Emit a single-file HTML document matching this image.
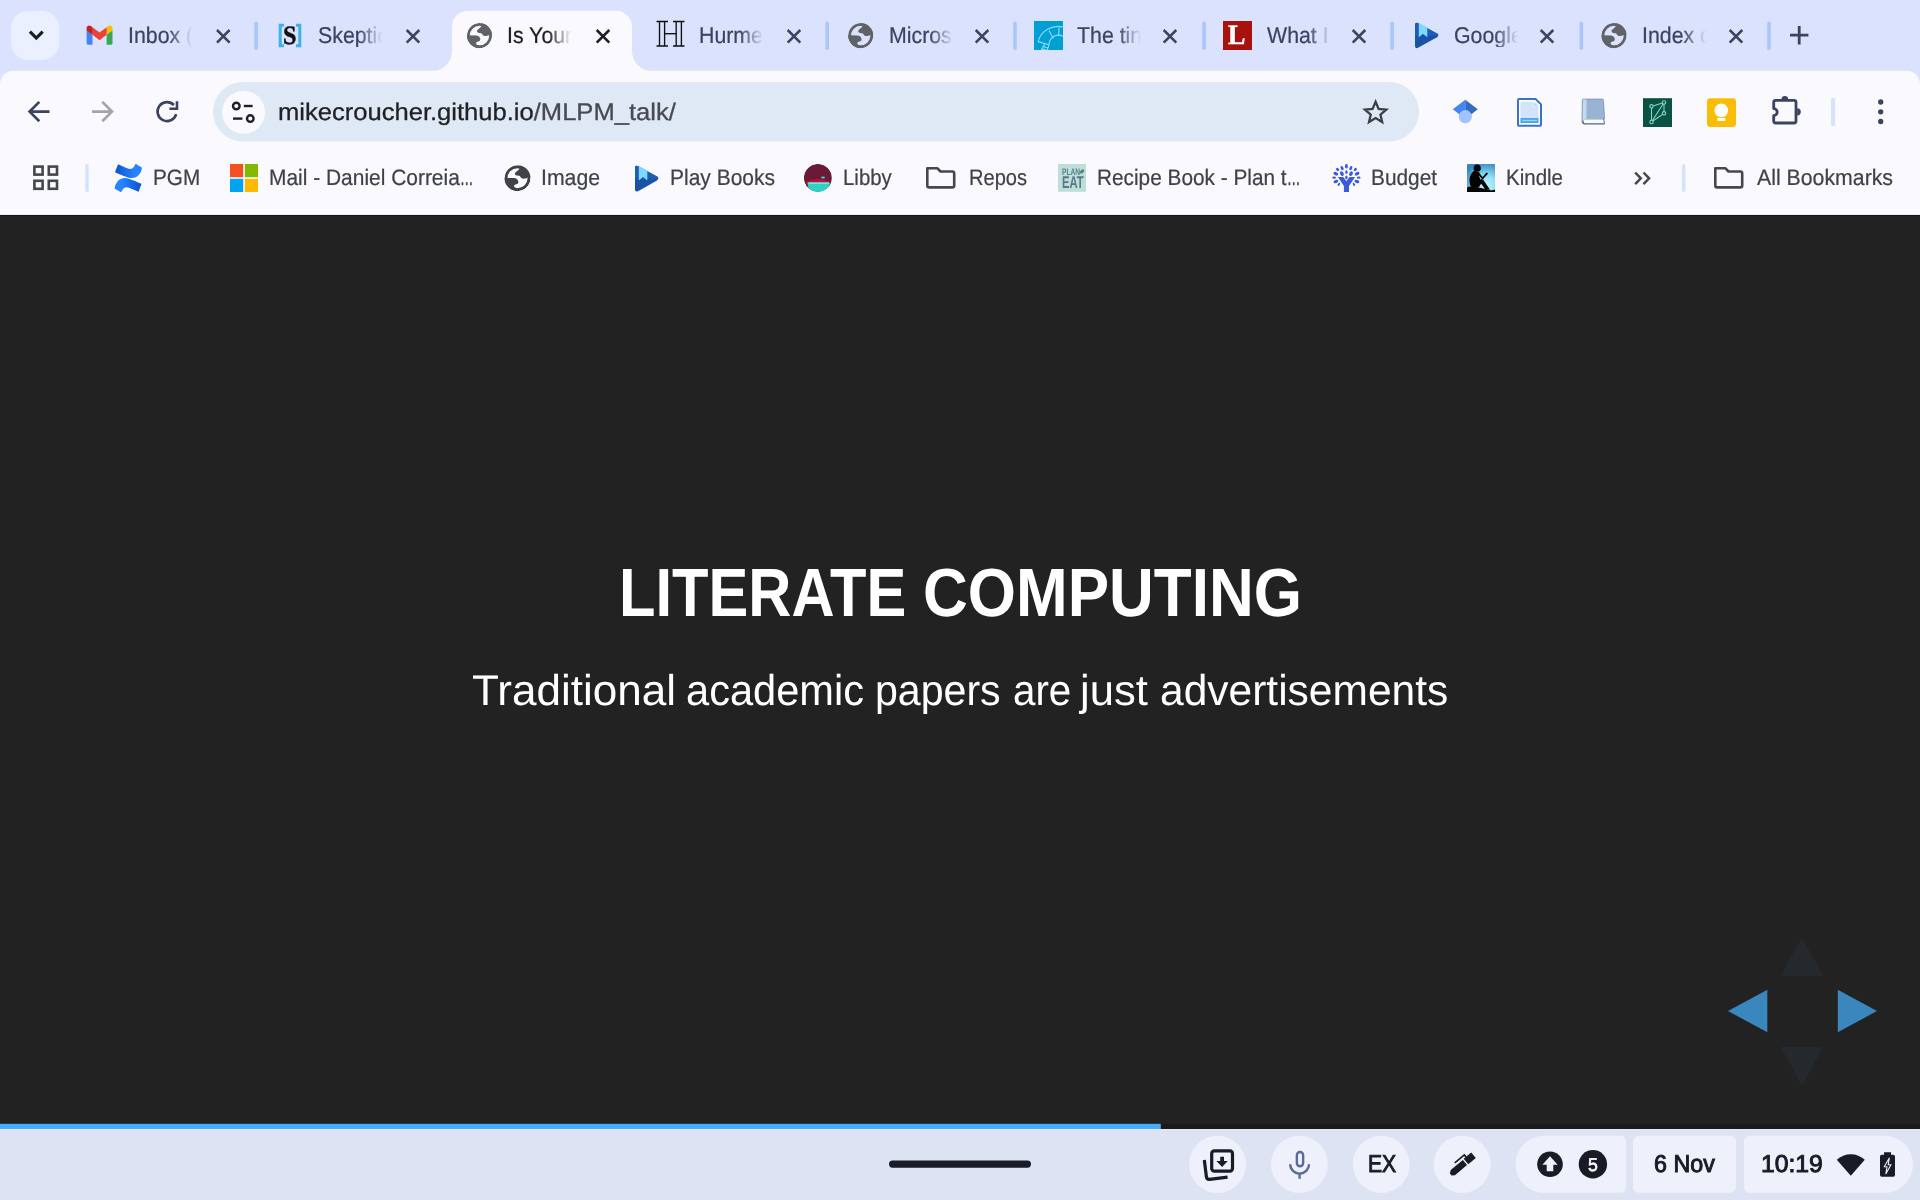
<!DOCTYPE html>
<html lang="en"><head><meta charset="utf-8"><title>Is Your Research Software Correct?</title>
<style>
html,body{margin:0;padding:0}
body{width:1920px;height:1200px;overflow:hidden;background:#222222;position:relative;font-family:"Liberation Sans",sans-serif}
.t{text-rendering:geometricPrecision;position:absolute;white-space:nowrap;line-height:1;transform-origin:0 0;display:block}
.abs{position:absolute}
svg{position:absolute;overflow:visible}
.serif{font-family:"Liberation Serif",serif}
</style></head>
<body>

<!-- ======== browser chrome background ======== -->
<svg class="abs" style="left:0;top:0" width="1920" height="215" viewBox="0 0 1920 215">
  <rect x="0" y="0" width="1920" height="100" fill="#dae2fd"/>
  <!-- toolbar with rounded top corners -->
  <path d="M0 214 V84.3 A13.5 13.5 0 0 1 13.5 70.8 H1906.5 A13.5 13.5 0 0 1 1920 84.3 V214 Z" fill="#f9f9fe"/>
  <rect x="0" y="214" width="1920" height="1" fill="#e6edfc"/>
  <!-- active tab -->
  <path d="M432 71 A20 20 0 0 0 452 51 V26.7 A16 16 0 0 1 468 10.7 H616 A16 16 0 0 1 632 26.7 V51 A20 20 0 0 0 652 71 Z" fill="#f9f9fe"/>
  <!-- tab search button -->
  <rect x="11" y="11" width="48.3" height="49" rx="17" fill="#eaf0ff"/>
  <path d="M29.9 31.7 L36.300 38.1 L42.700 31.7" fill="none" stroke="#1b1d24" stroke-width="3.2"/>
  <!-- tab separators -->
  <g fill="#a8c7fa">
    <rect x="254.3" y="21.5" width="3.6" height="28.6" rx="1.8"/>
    <rect x="825.4" y="21.5" width="3.6" height="28.6" rx="1.8"/>
    <rect x="1013.2" y="21.5" width="3.6" height="28.6" rx="1.8"/>
    <rect x="1202.3" y="21.5" width="3.6" height="28.6" rx="1.8"/>
    <rect x="1390.3" y="21.5" width="3.6" height="28.6" rx="1.8"/>
    <rect x="1579.5" y="21.5" width="3.6" height="28.6" rx="1.8"/>
    <rect x="1767.2" y="21.5" width="3.6" height="28.6" rx="1.8"/>
  </g>
  <!-- close buttons -->
  <g fill="none" stroke="#3a4362" stroke-width="2.5">
    <path d="M217 30 l12.6 12.6 m0 -12.6 l-12.6 12.6"/>
    <path d="M406.7 30 l12.6 12.6 m0 -12.6 l-12.6 12.6"/>
    <path d="M787.7 30 l12.6 12.6 m0 -12.6 l-12.6 12.6"/>
    <path d="M975.7 30 l12.6 12.6 m0 -12.6 l-12.6 12.6"/>
    <path d="M1163.7 30 l12.6 12.6 m0 -12.6 l-12.6 12.6"/>
    <path d="M1352.7 30 l12.6 12.6 m0 -12.6 l-12.6 12.6"/>
    <path d="M1540.7 30 l12.6 12.6 m0 -12.6 l-12.6 12.6"/>
    <path d="M1729.7 30 l12.6 12.6 m0 -12.6 l-12.6 12.6"/>
  </g>
  <path d="M596.7 30 l12.6 12.6 m0 -12.6 l-12.6 12.6" fill="none" stroke="#1b1d24" stroke-width="2.5"/>
  <!-- new tab plus -->
  <path d="M1790 35.2 h18.4 M1799.2 26 v18.4" fill="none" stroke="#3a4362" stroke-width="2.8"/>

  <!-- omnibox -->
  <rect x="213" y="82" width="1206" height="59.5" rx="29.75" fill="#dfe9f5"/>
  <circle cx="243.6" cy="112.3" r="21.5" fill="#f9f9fe"/>
  <!-- site info (tune) icon -->
  <g fill="none" stroke="#1f2125" stroke-width="2.4">
    <circle cx="236.3" cy="106" r="3.3"/>
    <path d="M243.8 106 h8.8"/>
    <circle cx="250.3" cy="118.6" r="3.3"/>
    <path d="M233 118.6 h9.4"/>
  </g>
  <!-- back -->
  <path d="M49.5 111.6 H30.6 M39.3 101.9 L29.6 111.6 L39.3 121.3" fill="none" stroke="#3a4362" stroke-width="2.7"/>
  <!-- forward (disabled) -->
  <path d="M92 111.6 H111 M102.3 101.9 L112 111.6 L102.3 121.3" fill="none" stroke="#a3a5ab" stroke-width="2.7"/>
  <!-- reload -->
  <path d="M176.2 114.2 A9.5 9.5 0 1 1 173.9 105" fill="none" stroke="#3a4362" stroke-width="2.6"/>
  <path d="M177 101.200 V108.800 H169.400" fill="none" stroke="#3a4362" stroke-width="2.6"/>
  <!-- star -->
  <path d="M1375.60 101.80 L1378.60 108.87 L1386.25 109.54 L1380.45 114.58 L1382.18 122.06 L1375.60 118.10 L1369.02 122.06 L1370.75 114.58 L1364.95 109.54 L1372.60 108.87 Z" fill="none" stroke="#3c4043" stroke-width="2.3" stroke-linejoin="miter" stroke-miterlimit="6"/>

  <!-- extension icons -->
  <!-- scholar -->
  <path d="M1465.3 99.7 L1452.8 109.3 L1465.3 118.9 Z" fill="#4285f4"/>
  <path d="M1465.3 99.7 L1477.8 109.3 L1465.3 118.9 Z" fill="#356ac3"/>
  <circle cx="1465.3" cy="116.6" r="6.6" fill="#a0c3ff"/>
  <!-- document -->
  <path d="M1519 98 H1536 L1542 104 V125 Q1542 126.700 1540.300 126.700 H1518.700 Q1517 126.700 1517 125 V100 Q1517 98 1519 98 Z" fill="#3a74c4"/>
  <path d="M1519 100 H1535.200 L1540 104.800 V124.700 H1519 Z" fill="#fdfdff"/>
  <path d="M1520.500 101.700 H1533 V107 H1538.500 V118 H1520.500 Z" fill="#d3e3f9"/>
  <path d="M1533.600 101.200 L1539 106.600 H1533.600 Z" fill="#bfd8f4"/>
  <rect x="1520.500" y="118" width="18" height="5" fill="#45a6f1"/>
  <rect x="1522.200" y="119.800" width="14.600" height="1.400" fill="#9dd2f8"/>
  <!-- book -->
  <path d="M1583.300 99 H1602.500 Q1603.300 99 1603.400 100 L1604.700 118.500 L1602.800 120 H1584.500 L1581.900 122 L1582.300 100 Q1582.400 99 1583.300 99 Z" fill="#98b3d3" stroke="#6a7fb0" stroke-width=".6"/>
  <path d="M1583 99.600 H1586.600 L1586.400 118.600 L1582.600 120.800 Z" fill="#c6d9ec"/>
  <path d="M1584.800 119.400 H1603.400 L1604.200 123.300 H1584 Q1582.600 121.500 1584.800 119.400 Z" fill="#fbfbf6"/>
  <path d="M1582 121.500 Q1582 124.500 1584.500 124.500 H1604.500 V123.200 H1585 Q1583.400 123.200 1583.500 121 Z" fill="#4f629b"/>
  <path d="M1603.600 118.500 L1604.500 124" stroke="#4f629b" stroke-width=".9" fill="none"/>
  <!-- graph icon -->
  <rect x="1643" y="98.2" width="29" height="28.8" fill="#0b5145"/>
  <g fill="none" stroke="#7fd8c4" stroke-width="1.1">
    <path d="M1651.5 106.5 L1664 102.5 L1664 113.5 L1651.5 122 Z M1664 102.5 L1651.5 122"/>
    <circle cx="1651.5" cy="106.3" r="1.7" fill="#0b5145"/>
    <circle cx="1664" cy="102.5" r="1.7" fill="#0b5145"/>
    <circle cx="1664" cy="113.3" r="1.7" fill="#0b5145"/>
    <circle cx="1651.5" cy="122" r="1.7" fill="#0b5145"/>
  </g>
  <!-- keep -->
  <rect x="1707" y="98.2" width="29" height="28.8" rx="3.4" fill="#fbbc04"/>
  <circle cx="1721.3" cy="110.4" r="6.8" fill="#ffffff"/>
  <rect x="1717.4" y="117.9" width="7.9" height="3" fill="#ffffff"/>
  <!-- puzzle -->
  <path d="M1773.7 108.6 V102.3 Q1773.7 100.3 1775.7 100.3 H1794 Q1796 100.3 1796 102.3 V121 Q1796 123 1794 123 H1775.7 Q1773.7 123 1773.7 121 V115.6 A3.5 3.5 0 0 0 1773.7 108.6 Z" fill="none" stroke="#3a4362" stroke-width="2.8" stroke-linejoin="round"/>
  <path d="M1781.6 99.2 A3.25 3.25 0 0 1 1788.1 99.2 Z M1797.2 108.2 A3.6 3.6 0 0 1 1797.2 115.4 Z" fill="#3a4362"/>
  <!-- separator -->
  <rect x="1831" y="98" width="4" height="28" rx="2" fill="#d3e2fd"/>
  <!-- kebab -->
  <g fill="#3a4362"><circle cx="1880.7" cy="102" r="2.65"/><circle cx="1880.7" cy="111.8" r="2.65"/><circle cx="1880.7" cy="121.5" r="2.65"/></g>
</svg>

<!-- ======== tab favicons ======== -->
<svg class="abs" style="left:0;top:0" width="1920" height="70" viewBox="0 0 1920 70">
  <!-- gmail -->
  <g transform="translate(86.6 25.4) scale(0.1012)">
    <path d="M58.182 192.05V93.14L27.507 65.077 0 49.504v125.091c0 9.658 7.825 17.455 17.455 17.455z" fill="#4285f4"/>
    <path d="M197.818 192.05h40.727c9.659 0 17.455-7.826 17.455-17.455V49.505l-31.156 17.837-27.026 25.798z" fill="#34a853"/>
    <path d="M58.182 93.14l-4.174-38.647 4.174-36.989L128 69.868l69.818-52.364 4.669 34.992-4.669 40.644L128 145.504z" fill="#ea4335"/>
    <path d="M197.818 17.504V93.14L256 49.504V26.231c0-21.585-24.64-33.89-41.89-20.945z" fill="#fbbc04"/>
    <path d="M0 49.504l26.759 20.07L58.182 93.14V17.504L41.89 5.286C24.61-7.66 0 4.646 0 26.23z" fill="#c5221f"/>
  </g>
  <!-- [S] brackets -->
  <g fill="none" stroke="#3bb3ea" stroke-width="3">
    <path d="M284 25.2 H280.2 V45.7 H284"/>
    <path d="M296 25.2 H299.8 V45.7 H296"/>
  </g>
  <!-- globes -->
  <defs>
    <clipPath id="gclip"><circle cx="0" cy="0" r="12.55"/></clipPath>
    <g id="globe" clip-path="url(#gclip)">
      <circle cx="0" cy="0" r="11.15" fill="none" stroke="currentColor" stroke-width="2.8"/>
      <path fill="currentColor" d="M1.9 -13 L1.9 -9.75 Q1.6 -8.3 0 -7.3 Q-2.2 -6 -2.5 -4.5 Q-2.6 -3 -0.7 -2.6 L1.7 -2.4 Q2.6 -2.2 2.9 -1.2 Q3.4 0 5 0.35 Q7 0.7 8.6 0 Q9.6 -0.4 10.25 -0.9 L13 -1 L13 -13 Z"/>
      <path fill="currentColor" d="M-13 -0.3 L-3.1 -0.2 Q-1 -0.1 0 1.5 Q1.3 3.3 0.6 5 Q0 6 -2 6.2 Q-3.4 6.600 -3.4 7.8 Q-3.4 9.3 -0.7 10 L-0.7 13 L-13 13 Z"/>
    </g>
  </defs>
  <use href="#globe" transform="translate(479.5 35.6)" color="#5f6368"/>
  <use href="#globe" transform="translate(860.7 35.6)" color="#5f6368"/>
  <use href="#globe" transform="translate(1614 35.6)" color="#5f6368"/>
  <!-- H (double struck) -->
  <g fill="none" stroke="#111111" stroke-width="1.35">
    <path d="M656.5 21.5 H668 M656.5 46 H668 M673 21.5 H684.5 M673 46 H684.5"/>
    <path d="M659.5 21.5 V46 M664.6 21.5 V46 M676.2 21.5 V46 M681.4 21.5 V46"/>
    <path d="M664.6 33.7 H676.2"/>
  </g>
  <!-- teal tile -->
  <rect x="1034" y="21" width="29" height="29" fill="#009fd3"/>
  <clipPath id="tileclip"><rect x="1034" y="21" width="29" height="29"/></clipPath>
  <g fill="none" stroke="#8adbf2" stroke-width="1.1" clip-path="url(#tileclip)">
    <path d="M1038 41.600 A21 21 0 0 1 1064 27.200"/>
    <path d="M1049.200 44.800 A9.300 9.300 0 0 1 1064 37"/>
    <path d="M1038 41.600 L1049 44.800 M1049 30.500 L1053.300 38.500 M1059 27.600 L1058.700 36.200"/>
    <path d="M1049 44.800 L1047 51 M1045 43.600 L1041 51 M1042.500 46 l5.500 2.200 M1041.500 48.300 l5 2"/>
  </g>
  <!-- L tile -->
  <rect x="1223" y="21" width="29" height="29" fill="#a8120e"/>
  <!-- play books (tab) -->
  <g>
    <path d="M1415 25 Q1415 22 1417.8 23 L1437 33.4 Q1439.5 35.3 1437 37.2 L1418 47.8 Q1415 49 1415 46 Z" fill="#1a52a5"/>
    <path d="M1415 25 Q1415 22 1417.8 23 L1437 33.4 Q1438.6 34.5 1438.4 35.4 L1415 35.4 Z" fill="#1f5cb8"/>
    <path d="M1418.8 22.9 L1427.3 27.6 V37.2 L1423 33.8 L1418.8 37.2 Z" fill="#7fd8ff"/>
  </g>
</svg>
<span class="t serif" style="left:283.2px;top:23.4px;font-size:26px;font-weight:bold;color:#111;-webkit-text-stroke:0.5px #111;transform:scale(.93,1.02)">S</span>
<span class="t serif" style="left:1228.3px;top:22.4px;font-size:28px;font-weight:bold;color:#fff;-webkit-text-stroke:0.5px #fff;transform:scale(.93,1)">L</span>

<!-- ======== bookmark bar icons ======== -->
<svg class="abs" style="left:0;top:140px" width="1920" height="75" viewBox="0 140 1920 75">
  <!-- apps grid -->
  <g fill="none" stroke="#44474d" stroke-width="2.6">
    <rect x="34.4" y="166.6" width="8.2" height="8"/>
    <rect x="48.8" y="166.6" width="8.2" height="8"/>
    <rect x="34.4" y="180.8" width="8.2" height="8"/>
    <rect x="48.8" y="180.8" width="8.2" height="8"/>
  </g>
  <rect x="85.3" y="164" width="3.4" height="28" rx="1.7" fill="#d3e2fd"/>
  <!-- confluence -->
  <defs>
    <linearGradient id="cfa" x1="0" y1="0" x2="1" y2="0"><stop offset="0" stop-color="#0a53cf"/><stop offset=".75" stop-color="#2684ff"/></linearGradient>
    <linearGradient id="cfb" x1="0" y1="0" x2="1" y2="0"><stop offset=".25" stop-color="#2684ff"/><stop offset="1" stop-color="#0a53cf"/></linearGradient>
  </defs>
  <g transform="translate(100 155) scale(0.0375)">
    <path d="M480 245 L720 350 C800 385 880 390 935 250 L960 240 L1115 330 C1120 380 1100 430 1050 510 C990 590 900 620 800 610 C720 600 560 530 400 460 Z" fill="url(#cfa)"/>
    <path d="M1010 975 L770 870 C690 835 610 830 555 970 L530 980 L375 890 C370 840 390 790 440 710 C500 630 590 600 690 610 C770 620 930 690 1090 760 Z" fill="url(#cfb)" transform="translate(18 8)"/>
  </g>
  <!-- microsoft -->
  <rect x="230" y="164" width="13.2" height="13.2" fill="#f25022"/>
  <rect x="244.800" y="164" width="13.2" height="13.2" fill="#7fba00"/>
  <rect x="230" y="178.800" width="13.2" height="13.2" fill="#00a4ef"/>
  <rect x="244.800" y="178.800" width="13.2" height="13.2" fill="#ffb900"/>
  <!-- globe -->
  <use href="#globe" transform="translate(517.5 178.2) scale(1.03)" color="#3f4248"/>
  <!-- play books -->
  <g>
    <path d="M635 168 Q635 165 637.800 166 L657 176.600 Q659.500 178.500 657 180.400 L638 191.200 Q635 192.400 635 189.400 Z" fill="#1a52a5"/>
    <path d="M635 168 Q635 165 637.800 166 L657 176.600 Q658.600 177.700 658.400 178.600 L635 178.600 Z" fill="#1f5cb8"/>
    <path d="M638.800 165.900 L647.300 170.600 V180.400 L643 177 L638.800 180.400 Z" fill="#7fd8ff"/>
  </g>
  <!-- libby -->
  <clipPath id="libclip"><circle cx="817.9" cy="177.9" r="14"/></clipPath>
  <g clip-path="url(#libclip)">
    <circle cx="817.9" cy="177.9" r="14" fill="#6b1a36"/>
    <path d="M806.5 181.800 Q818 176.200 829.500 181.800 L830 183.200 H806 Z" fill="#b8123f"/>
    <path d="M807.600 182.600 H829.800 Q830 187.500 826.300 190.200 Q818 194.800 810.800 190.200 Q807.300 187.500 807.600 182.600 Z" fill="#2cd3c4"/>
    <rect x="808.500" y="182.500" width="20.500" height="1.100" fill="#c9f4ee" opacity=".85"/>
    <ellipse cx="823" cy="177.500" rx="2" ry="1.100" fill="#2ee0d0"/>
  </g>
  <!-- folder (Repos) -->
  <path d="M927.300 168.300 H937.500 L940.500 171.500 H952.300 Q954.200 171.500 954.200 173.400 V185.500 Q954.200 187.400 952.300 187.400 H929.200 Q927.300 187.400 927.300 185.500 Z" fill="none" stroke="#44474d" stroke-width="2.6" stroke-linejoin="round"/>
  <!-- plan to eat -->
  <rect x="1058" y="164" width="28" height="27.800" fill="#bddfd7"/>
  <ellipse cx="1082" cy="171.4" rx="2.6" ry="1.6" transform="rotate(-40 1082 171.4)" fill="#5c7f8f"/>
  <!-- ynab tree -->
  <g fill="#3b5bdb">
    <path d="M1337.9 177.1 H1343.3 L1346.4 181.2 L1349.5 177.1 H1355 L1349 186 V191.900 H1343.9 V186 Z"/>
    <ellipse cx="1346.4" cy="166.3" rx="1.45" ry="2.3" transform="rotate(0 1346.4 166.3)"/><ellipse cx="1342.1" cy="168.1" rx="1.4" ry="2.2" transform="rotate(-25 1342.1 168.1)"/><ellipse cx="1350.8" cy="168.1" rx="1.4" ry="2.2" transform="rotate(25 1350.8 168.1)"/><ellipse cx="1337.6" cy="169.5" rx="1.3" ry="1.9" transform="rotate(-45 1337.6 169.5)"/><ellipse cx="1355.3" cy="169.5" rx="1.3" ry="1.9" transform="rotate(45 1355.3 169.5)"/><ellipse cx="1335.8" cy="173.7" rx="1.6" ry="2.5" transform="rotate(-65 1335.8 173.7)"/><ellipse cx="1341.9" cy="173.6" rx="1.7" ry="2.5" transform="rotate(-30 1341.9 173.6)"/><ellipse cx="1346.4" cy="172.1" rx="1.2" ry="1.9" transform="rotate(0 1346.4 172.1)"/><ellipse cx="1351" cy="173.6" rx="1.7" ry="2.5" transform="rotate(30 1351 173.6)"/><ellipse cx="1357.1" cy="173.7" rx="1.6" ry="2.5" transform="rotate(65 1357.1 173.7)"/><ellipse cx="1334.1" cy="177.7" rx="1.1" ry="1.9" transform="rotate(-90 1334.1 177.7)"/><ellipse cx="1346.4" cy="177.4" rx="1.2" ry="1.9" transform="rotate(0 1346.4 177.4)"/><ellipse cx="1358.7" cy="177.7" rx="1.1" ry="1.9" transform="rotate(90 1358.7 177.7)"/><ellipse cx="1335.9" cy="181.5" rx="1.5" ry="2.5" transform="rotate(-110 1335.9 181.5)"/><ellipse cx="1356.9" cy="181.5" rx="1.5" ry="2.5" transform="rotate(110 1356.9 181.5)"/><ellipse cx="1338.9" cy="184.4" rx="1.0" ry="1.7" transform="rotate(-145 1338.9 184.4)"/><ellipse cx="1353.9" cy="184.4" rx="1.0" ry="1.7" transform="rotate(145 1353.9 184.4)"/>
  </g>
  <!-- kindle -->
  <defs><radialGradient id="kg" cx="0.68" cy="0.78" r="0.85"><stop offset="0" stop-color="#c3f6fe"/><stop offset=".45" stop-color="#8edcf4"/><stop offset="1" stop-color="#3587c2"/></radialGradient></defs>
  <rect x="1467" y="163.900" width="28" height="28" rx="1" fill="url(#kg)"/>
  <g transform="translate(1455 155) scale(0.0375)" fill="#020404">
    <circle cx="592" cy="352" r="96"/>
    <path d="M555 275 L585 245 L615 282 Z"/>
    <path d="M520 415 C420 480 378 600 388 720 C394 800 420 845 470 865 L640 865 L700 700 L640 560 L655 465 Z"/>
    <path d="M598 495 L700 618 L748 600 L645 478 Z"/>
    <path d="M702 628 L842 468 L882 492 L748 648 Z"/>
    <path d="M470 865 L700 640 L748 650 L935 925 L800 905 L700 765 L600 875 Z"/>
    <path d="M320 872 C380 830 450 838 560 860 C700 882 820 900 900 925 C980 952 1030 932 1068 918 L1068 985 L320 985 Z"/>
  </g>
  <!-- chevrons -->
  <path d="M1635.200 172.500 L1640.800 178.300 L1635.200 184.100 M1643.500 172.500 L1649.100 178.300 L1643.500 184.100" fill="none" stroke="#44474d" stroke-width="2.500"/>
  <rect x="1682" y="164" width="3.400" height="28" rx="1.700" fill="#d3e2fd"/>
  <!-- folder (All Bookmarks) -->
  <path d="M1715.300 168.300 H1725.500 L1728.500 171.500 H1740.300 Q1742.200 171.500 1742.200 173.400 V185.500 Q1742.200 187.400 1740.300 187.400 H1717.200 Q1715.300 187.400 1715.300 185.500 Z" fill="none" stroke="#44474d" stroke-width="2.600" stroke-linejoin="round"/>
</svg>
<span class="t" style="left:1061.6px;top:167.6px;font-size:9.5px;font-weight:bold;color:#5c7f8f;transform:scale(.7,1)">PLAN</span>
<span class="t" style="left:1061.5px;top:174.1px;font-size:17px;font-weight:bold;color:#57798b;transform:scale(.66,1)">EAT</span>

<!-- ======== slide (reveal.js) ======== -->
<div class="abs" style="left:0;top:215px;width:1920px;height:914px;background:#222222;border-top:1px solid #151515;box-sizing:border-box"></div>
<svg class="abs" style="left:0;top:900px" width="1920" height="230" viewBox="0 900 1920 230">
  <!-- navigation controls -->
  <path d="M1728 1011 L1767.300 989.700 V1032.300 Z" fill="#3a87bd"/>
  <path d="M1877 1011 L1837.800 989.700 V1032.300 Z" fill="#3a87bd"/>
  <path d="M1802 937.300 L1823.300 976 H1780.700 Z" fill="#25292d"/>
  <path d="M1802 1085.500 L1823.300 1046.800 H1780.700 Z" fill="#25292d"/>
  <!-- progress -->
  <rect x="0" y="1123.800" width="1920" height="5.200" fill="#1a1a1a"/>
  <rect x="0" y="1123.800" width="1160.800" height="5.200" fill="#42affa"/>
</svg>

<!-- ======== ChromeOS shelf ======== -->
<div class="abs" style="left:0;top:1129px;width:1920px;height:71px;background:#dde3f3;border-top:1px solid #e3e8f6;box-sizing:border-box"></div>
<svg class="abs" style="left:0;top:1129px" width="1920" height="71" viewBox="0 1129 1920 71">
  <rect x="889" y="1160.500" width="142" height="7.200" rx="3.600" fill="#191c26"/>
  <g fill="#eef1fb">
    <circle cx="1217.500" cy="1164.300" r="28.500"/>
    <circle cx="1299.400" cy="1164.300" r="28.500"/>
    <circle cx="1381.200" cy="1164.300" r="28.500"/>
    <circle cx="1462.200" cy="1164.300" r="28.500"/>
    <path d="M1544 1135.800 H1620 Q1626 1135.800 1626 1141.800 V1186.800 Q1626 1192.800 1620 1192.800 H1544 A28.500 28.500 0 0 1 1544 1135.800 Z"/>
    <rect x="1633" y="1135.800" width="103" height="57" rx="6"/>
    <path d="M1750 1135.800 H1884.500 A28.500 28.500 0 0 1 1884.500 1192.800 H1750 Q1744 1192.800 1744 1186.800 V1141.800 Q1744 1135.800 1750 1135.800 Z"/>
  </g>
  <!-- holding space icon -->
  <g fill="none" stroke="#191c26" stroke-width="3.2" stroke-linejoin="round">
    <rect x="1211.700" y="1150.800" width="20.800" height="20.300" rx="2.600"/>
    <path d="M1204.300 1160 L1206.400 1176.800 Q1206.800 1179.600 1209.600 1179.300 L1227.600 1177.200" stroke-linecap="butt"/>
  </g>
  <path d="M1220.200 1156.700 h3.800 v4.300 h3.800 l-5.700 6 l-5.700 -6 h3.800 z" fill="#191c26"/>
  <!-- mic -->
  <rect x="1296.850" y="1152" width="6.300" height="14.200" rx="3.150" fill="none" stroke="#5a6a97" stroke-width="2.400"/>
  <path d="M1290.200 1164.300 A9.400 9.400 0 0 0 1309 1164.300 M1299.600 1173.700 V1178.800" fill="none" stroke="#5a6a97" stroke-width="2.400"/>
  <!-- pen -->
  <g transform="translate(1450.700 1174.400) rotate(-40)" fill="#191c26">
    <path d="M0 -1.300 L2.800 -3.300 H18.600 V3.300 H2.800 L0 1.300 Z"/>
    <path d="M19.900 -3.600 H29.800 V3.600 H19.900 Z"/>
    <path d="M10.500 -6.200 H23 V-3.600" fill="none" stroke="#191c26" stroke-width="1.700"/>
  </g>
  <!-- notification: upload -->
  <circle cx="1550" cy="1164.300" r="12.800" fill="#191c26"/>
  <path d="M1550 1156.300 L1557.600 1164.800 H1553.300 V1171.200 H1546.700 V1164.800 H1542.400 Z" fill="#eef1fb"/>
  <circle cx="1592.900" cy="1164.300" r="14.200" fill="#191c26"/>
  <!-- wifi -->
  <path d="M1850.800 1175.800 L1836.800 1159.800 A20.500 20.500 0 0 1 1864.800 1159.800 Z" fill="#191c26"/>
  <!-- battery -->
  <path d="M1884 1152.300 H1891 V1154.800 H1893.300 Q1895 1154.800 1895 1156.500 V1175 Q1895 1176.700 1893.300 1176.700 H1881.700 Q1880 1176.700 1880 1175 V1156.500 Q1880 1154.800 1881.700 1154.800 H1884 Z" fill="#191c26"/>
  <path d="M1889.300 1158 L1884.200 1166.800 H1887 L1885.900 1173.800 L1891 1164.700 H1888.200 Z" fill="none" stroke="#eef1fb" stroke-width="1.100" stroke-linejoin="round"/>
</svg>

<!-- text -->
<span class="t" id="tab0" style="left:127.70px;top:24.04px;font-size:22.9px;color:#3a4362;font-weight:normal;transform:scale(0.9315,1.0000);-webkit-text-stroke:0.22px;width:70.9px;overflow:hidden;-webkit-mask-image:linear-gradient(90deg,#000 43.9px,transparent 68.9px);mask-image:linear-gradient(90deg,#000 43.9px,transparent 68.9px);">Inbox (</span>
<span class="t" id="tab1" style="left:317.90px;top:24.04px;font-size:22.9px;color:#3a4362;font-weight:normal;transform:scale(0.9315,1.0000);-webkit-text-stroke:0.22px;width:70.9px;overflow:hidden;-webkit-mask-image:linear-gradient(90deg,#000 43.9px,transparent 68.9px);mask-image:linear-gradient(90deg,#000 43.9px,transparent 68.9px);">Skeptic</span>
<span class="t" id="tab2" style="left:507.10px;top:24.04px;font-size:22.9px;color:#1b1d24;font-weight:normal;transform:scale(0.9315,1.0000);-webkit-text-stroke:0.22px;width:70.9px;overflow:hidden;-webkit-mask-image:linear-gradient(90deg,#000 43.9px,transparent 68.9px);mask-image:linear-gradient(90deg,#000 43.9px,transparent 68.9px);">Is Your</span>
<span class="t" id="tab3" style="left:699.00px;top:24.04px;font-size:22.9px;color:#3a4362;font-weight:normal;transform:scale(0.9315,1.0000);-webkit-text-stroke:0.22px;width:70.9px;overflow:hidden;-webkit-mask-image:linear-gradient(90deg,#000 43.9px,transparent 68.9px);mask-image:linear-gradient(90deg,#000 43.9px,transparent 68.9px);">Hurme</span>
<span class="t" id="tab4" style="left:889.10px;top:24.04px;font-size:22.9px;color:#3a4362;font-weight:normal;transform:scale(0.9315,1.0000);-webkit-text-stroke:0.22px;width:70.9px;overflow:hidden;-webkit-mask-image:linear-gradient(90deg,#000 43.9px,transparent 68.9px);mask-image:linear-gradient(90deg,#000 43.9px,transparent 68.9px);">Micros</span>
<span class="t" id="tab5" style="left:1077.30px;top:24.04px;font-size:22.9px;color:#3a4362;font-weight:normal;transform:scale(0.9315,1.0000);-webkit-text-stroke:0.22px;width:70.9px;overflow:hidden;-webkit-mask-image:linear-gradient(90deg,#000 43.9px,transparent 68.9px);mask-image:linear-gradient(90deg,#000 43.9px,transparent 68.9px);">The tin</span>
<span class="t" id="tab6" style="left:1267.10px;top:24.04px;font-size:22.9px;color:#3a4362;font-weight:normal;transform:scale(0.9315,1.0000);-webkit-text-stroke:0.22px;width:70.9px;overflow:hidden;-webkit-mask-image:linear-gradient(90deg,#000 43.9px,transparent 68.9px);mask-image:linear-gradient(90deg,#000 43.9px,transparent 68.9px);">What I</span>
<span class="t" id="tab7" style="left:1454.00px;top:24.04px;font-size:22.9px;color:#3a4362;font-weight:normal;transform:scale(0.9315,1.0000);-webkit-text-stroke:0.22px;width:70.9px;overflow:hidden;-webkit-mask-image:linear-gradient(90deg,#000 43.9px,transparent 68.9px);mask-image:linear-gradient(90deg,#000 43.9px,transparent 68.9px);">Google</span>
<span class="t" id="tab8" style="left:1641.80px;top:24.04px;font-size:22.9px;color:#3a4362;font-weight:normal;transform:scale(0.9315,1.0000);-webkit-text-stroke:0.22px;width:70.9px;overflow:hidden;-webkit-mask-image:linear-gradient(90deg,#000 43.9px,transparent 68.9px);mask-image:linear-gradient(90deg,#000 43.9px,transparent 68.9px);">Index o</span>
<span class="t" id="url" style="left:277.80px;top:101.00px;font-size:24.0px;color:#474a50;font-weight:normal;transform:scale(1.0650,1.0000);-webkit-text-stroke:0.3px;"><span style="color:#1f2125">mikecroucher.github.io</span>/MLPM_talk/</span>
<span class="t" id="bm0" style="left:153.00px;top:166.94px;font-size:22.3px;color:#3f4248;font-weight:normal;transform:scale(0.9283,1.0000);-webkit-text-stroke:0.22px;">PGM</span>
<span class="t" id="bm1" style="left:269.20px;top:166.94px;font-size:22.3px;color:#3f4248;font-weight:normal;transform:scale(0.9389,1.0000);-webkit-text-stroke:0.22px;">Mail - Daniel Correia</span>
<span class="t" id="bm2" style="left:459.60px;top:166.94px;font-size:22.3px;color:#3f4248;font-weight:normal;transform:scale(0.6000,1.0000);-webkit-text-stroke:0.5px #3f4248;">…</span>
<span class="t" id="bm3" style="left:541.00px;top:166.94px;font-size:22.3px;color:#3f4248;font-weight:normal;transform:scale(0.9521,1.0000);-webkit-text-stroke:0.22px;">Image</span>
<span class="t" id="bm4" style="left:670.00px;top:166.94px;font-size:22.3px;color:#3f4248;font-weight:normal;transform:scale(0.9415,1.0000);-webkit-text-stroke:0.22px;">Play Books</span>
<span class="t" id="bm5" style="left:843.20px;top:166.94px;font-size:22.3px;color:#3f4248;font-weight:normal;transform:scale(0.9158,1.0000);-webkit-text-stroke:0.22px;">Libby</span>
<span class="t" id="bm6" style="left:969.00px;top:166.94px;font-size:22.3px;color:#3f4248;font-weight:normal;transform:scale(0.9002,1.0000);-webkit-text-stroke:0.22px;">Repos</span>
<span class="t" id="bm7" style="left:1097.00px;top:166.94px;font-size:22.3px;color:#3f4248;font-weight:normal;transform:scale(0.9328,1.0000);-webkit-text-stroke:0.22px;">Recipe Book - Plan t</span>
<span class="t" id="bm8" style="left:1286.50px;top:166.94px;font-size:22.3px;color:#3f4248;font-weight:normal;transform:scale(0.6000,1.0000);-webkit-text-stroke:0.5px #3f4248;">…</span>
<span class="t" id="bm9" style="left:1371.00px;top:166.94px;font-size:22.3px;color:#3f4248;font-weight:normal;transform:scale(0.9341,1.0000);-webkit-text-stroke:0.22px;">Budget</span>
<span class="t" id="bm10" style="left:1506.00px;top:166.94px;font-size:22.3px;color:#3f4248;font-weight:normal;transform:scale(0.9202,1.0000);-webkit-text-stroke:0.22px;">Kindle</span>
<span class="t" id="bm11" style="left:1757.00px;top:166.94px;font-size:22.3px;color:#3f4248;font-weight:normal;transform:scale(0.9544,1.0000);-webkit-text-stroke:0.22px;">All Bookmarks</span>
<span class="t" id="ex" style="left:1367.60px;top:1152.90px;font-size:25.2px;color:#191c26;font-weight:normal;transform:scale(0.8394,0.9700);-webkit-text-stroke:1.0px #191c26;">EX</span>
<span class="t" id="date" style="left:1654.40px;top:1152.90px;font-size:25.2px;color:#191c26;font-weight:normal;transform:scale(0.9240,0.9700);-webkit-text-stroke:1.0px #191c26;">6 Nov</span>
<span class="t" id="time" style="left:1760.60px;top:1152.90px;font-size:25.2px;color:#191c26;font-weight:normal;transform:scale(0.9810,0.9700);-webkit-text-stroke:1.0px #191c26;">10:19</span>
<span class="t" id="five" style="left:1587.70px;top:1156.19px;font-size:18.6px;color:#ffffff;font-weight:normal;transform:scale(0.9500,1.0000);-webkit-text-stroke:0.6px #fff;">5</span>
<!-- slide text -->
<h1 style="margin:0;font:inherit"><span class="t" id="h1_0" style="left:618.60px;top:558.93px;font-size:68.2px;color:#ffffff;font-weight:bold;transform:scale(0.8752,1.0000);">LITERATE</span> <span class="t" id="h1_1" style="left:923.40px;top:558.93px;font-size:68.2px;color:#ffffff;font-weight:bold;transform:scale(0.9093,1.0000);">COMPUTING</span></h1>
<p style="margin:0"><span class="t" id="p1_0" style="left:472.00px;top:669.55px;font-size:43.0px;color:#ffffff;font-weight:normal;transform:scale(1.0246,1.0000);">Traditional</span> <span class="t" id="p1_1" style="left:686.00px;top:669.55px;font-size:43.0px;color:#ffffff;font-weight:normal;transform:scale(0.9673,1.0000);">academic</span> <span class="t" id="p1_2" style="left:875.40px;top:669.55px;font-size:43.0px;color:#ffffff;font-weight:normal;transform:scale(0.9558,1.0000);">papers</span> <span class="t" id="p1_3" style="left:1012.60px;top:669.55px;font-size:43.0px;color:#ffffff;font-weight:normal;transform:scale(0.9378,1.0000);">are</span> <span class="t" id="p1_4" style="left:1080.40px;top:669.55px;font-size:43.0px;color:#ffffff;font-weight:normal;transform:scale(1.0141,1.0000);">just</span> <span class="t" id="p1_5" style="left:1159.60px;top:669.55px;font-size:43.0px;color:#ffffff;font-weight:normal;transform:scale(0.9885,1.0000);">advertisements</span></p>
</body></html>
